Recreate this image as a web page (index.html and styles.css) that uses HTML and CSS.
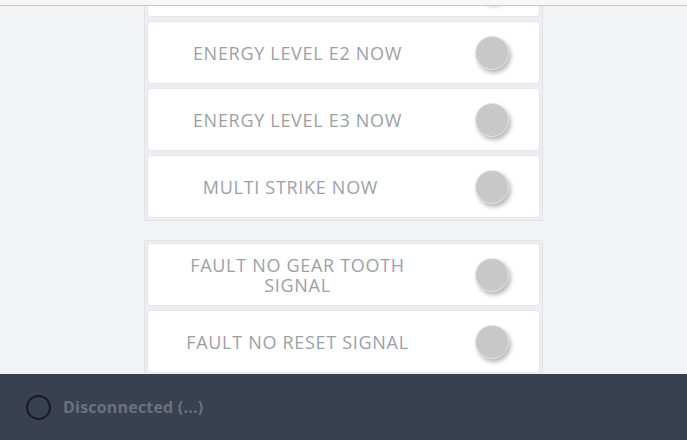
FILE: index.html
```html
<!DOCTYPE html>
<html>
<head>
<meta charset="utf-8">
<link rel="stylesheet" href="styles.css">
</head>
<body>
<div class="app">
  <header class="topbar"></header>
  <main class="main">
    <div class="content">
      <section class="group">
        <div class="card"><span class="label">ENERGY LEVEL E1 NOW</span><span class="toggle"></span></div>
        <div class="card"><span class="label">ENERGY LEVEL E2 NOW</span><span class="toggle"></span></div>
        <div class="card"><span class="label">ENERGY LEVEL E3 NOW</span><span class="toggle"></span></div>
        <div class="card"><span class="label label-shift">MULTI STRIKE NOW</span><span class="toggle"></span></div>
      </section>
      <section class="group">
        <div class="card"><span class="label">FAULT NO GEAR TOOTH<br>SIGNAL</span><span class="toggle"></span></div>
        <div class="card"><span class="label">FAULT NO RESET SIGNAL</span><span class="toggle"></span></div>
      </section>
    </div>
  </main>
  <footer class="statusbar">
    <span class="status-icon"></span>
    <span class="status-text">Disconnected (...)</span>
  </footer>
</div>
</body>
</html>
```

FILE: styles.css
```css
html, body {
  margin: 0;
  padding: 0;
  height: 100%;
}
body {
  font-family: "Open Sans", "Noto Sans", sans-serif;
  background: #f2f3f5;
}
.app {
  display: flex;
  flex-direction: column;
  height: 440px;
  overflow: hidden;
}
.topbar {
  height: 5px;
  background: #f7f7f7;
  border-bottom: 1px solid #c8c9cb;
  flex: none;
}
.main {
  flex: 1;
  overflow: hidden;
  background: #f2f3f5;
}
.content {
  width: 399px;
  margin: -55px auto 0;
  display: flex;
  flex-direction: column;
  gap: 19px;
}
.group {
  border: 1px solid #e2e3e6;
  background: #eceef1;
  padding: 2px;
  display: flex;
  flex-direction: column;
  gap: 4px;
}
.card {
  height: 63px;
  box-sizing: border-box;
  background: #ffffff;
  border: 1px solid #e6e7ea;
  border-radius: 4px;
  display: flex;
  align-items: center;
  padding-right: 30px;
}
.label {
  width: 300px;
  margin-right: 28px;
  text-align: center;
  font-size: 18px;
  line-height: 20px;
  letter-spacing: 0.7px;
  color: #9c9fa7;
}
.label-shift {
  padding-right: 14px;
  box-sizing: border-box;
}
.toggle {
  width: 32px;
  height: 32px;
  border-radius: 50%;
  background: #c8c8c8;
  border: 1px solid #e4e4e4;
  box-shadow: 2px 3px 4px rgba(0, 0, 0, 0.28);
  flex: none;
}
.statusbar {
  height: 66px;
  flex: none;
  background: #394150;
  display: flex;
  align-items: center;
  padding-left: 26px;
  gap: 12px;
}
.status-icon {
  width: 21px;
  height: 21px;
  border: 2px solid #161b26;
  border-radius: 50%;
}
.status-text {
  font-weight: 700;
  font-size: 16px;
  letter-spacing: 0.2px;
  color: #6b717e;
}
```
